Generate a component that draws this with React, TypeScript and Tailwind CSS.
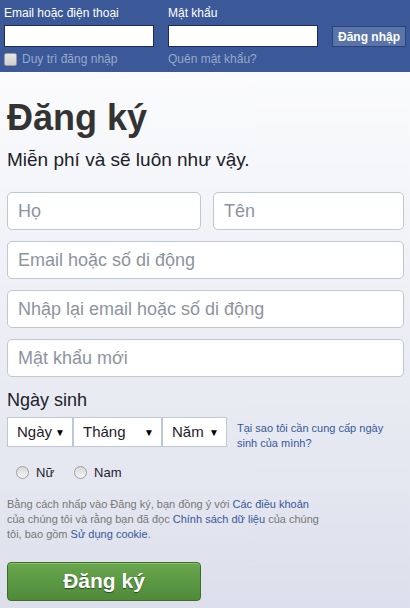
import React, { useState } from "react";

const font = { fontFamily: '"Liberation Sans", Arial, sans-serif' };

const Field = ({ placeholder, className = "" }: { placeholder: string; className?: string }) => (
  <input
    placeholder={placeholder}
    className={`h-[38px] rounded-[5px] border border-[#bdc7d8] bg-white px-[10px] text-[18px] text-[#1d2129] placeholder:text-[#8d949e] outline-none ${className}`}
  />
);

const Select = ({ label, width }: { label: string; width: string }) => (
  <div
    className={`${width} flex h-[30px] items-center justify-between border border-[#bdc7d8] bg-white pl-[9px] pr-[7px] text-[15px] text-[#1d2129]`}
  >
    <span>{label}</span>
    <span className="text-[10px] text-black">▼</span>
  </div>
);

const Radio = ({ label }: { label: string }) => (
  <label className="flex items-center gap-[7px] text-[13px] text-[#1d2129]">
    <span className="h-[13px] w-[13px] rounded-full border border-[#a0a0a0] bg-gradient-to-b from-[#d8d8d8] to-[#f4f4f4]" />
    {label}
  </label>
);

const App: React.FC = () => {
  const [remember, setRemember] = useState(false);

  return (
    <div style={font} className="min-h-[608px] w-[410px] bg-gradient-to-b from-white to-[#dde0ec]">
      <div className="h-[72px] bg-[#3b5998] px-[4px] pt-[5px]">
        <div className="flex items-end gap-[14px]">
          <div className="w-[150px]">
            <div className="mb-[3px] text-[12px] leading-[16px] text-white">Email hoặc điện thoại</div>
            <input className="h-[22px] w-[150px] border border-[#1d2a5b] bg-white outline-none" />
          </div>
          <div className="w-[150px]">
            <div className="mb-[3px] text-[12px] leading-[16px] text-white">Mật khẩu</div>
            <input type="password" className="h-[22px] w-[150px] border border-[#1d2a5b] bg-white outline-none" />
          </div>
          <button className="mb-px h-[21px] w-[75px] border border-[#29447e] bg-[#5b74a8] text-[12px] font-bold text-white">
            Đăng nhập
          </button>
        </div>
        <div className="mt-[3px] flex text-[12px] leading-[16px] text-[#98a9ca]">
          <label className="flex w-[164px] items-center gap-[5px]">
            <span
              onClick={() => setRemember(!remember)}
              className="h-[13px] w-[13px] rounded-[2px] border border-[#9a9a9a] bg-gradient-to-b from-[#e6e6e6] to-[#cfcfcf]"
            />
            Duy trì đăng nhập
          </label>
          <span>Quên mật khẩu?</span>
        </div>
      </div>

      <div className="pl-[7px] pr-[6px]">
        <h1 className="mt-[24px] text-[36px] font-bold leading-[44px] text-[#333]">Đăng ký</h1>
        <p className="mt-[8px] text-[19px] leading-[24px] text-[#1d2129]">Miễn phí và sẽ luôn như vậy.</p>

        <div className="mt-[20px] flex flex-col gap-[11px]">
          <div className="flex gap-[12px]">
            <Field placeholder="Họ" className="w-[194px]" />
            <Field placeholder="Tên" className="w-[191px]" />
          </div>
          <Field placeholder="Email hoặc số di động" className="w-full" />
          <Field placeholder="Nhập lại email hoặc số di động" className="w-full" />
          <Field placeholder="Mật khẩu mới" className="w-full" />
        </div>

        <div className="mt-[12px] text-[18px] leading-[22px] text-[#1d2129]">Ngày sinh</div>
        <div className="mt-[6px] flex items-start">
          <Select label="Ngày" width="w-[66px]" />
          <Select label="Tháng" width="w-[89px]" />
          <Select label="Năm" width="w-[65px]" />
          <div className="ml-[10px] mt-[4px] w-[150px] text-[11px] leading-[15px] text-[#365899]">
            Tại sao tôi cần cung cấp ngày sinh của mình?
          </div>
        </div>

        <div className="ml-[9px] mt-[12px] flex gap-[20px]">
          <Radio label="Nữ" />
          <Radio label="Nam" />
        </div>

        <p className="mt-[14px] w-[320px] text-[11px] leading-[15px] text-[#777]">
          Bằng cách nhấp vào Đăng ký, bạn đồng ý với <span className="text-[#365899]">Các điều khoản</span> của
          chúng tôi và rằng bạn đã đọc <span className="text-[#365899]">Chính sách dữ liệu</span> của chúng tôi, bao
          gồm <span className="text-[#365899]">Sử dụng cookie</span>.
        </p>

        <button className="mt-[20px] h-[39px] w-[194px] rounded-[4px] border border-[#3b6e22] bg-gradient-to-b from-[#69a74e] to-[#4f8a3a] text-[21px] font-bold text-white [text-shadow:0_1px_1px_rgba(0,0,0,0.5)] shadow-[inset_0_1px_0_#8ac176]">
          Đăng ký
        </button>
      </div>
    </div>
  );
};

export default App;
